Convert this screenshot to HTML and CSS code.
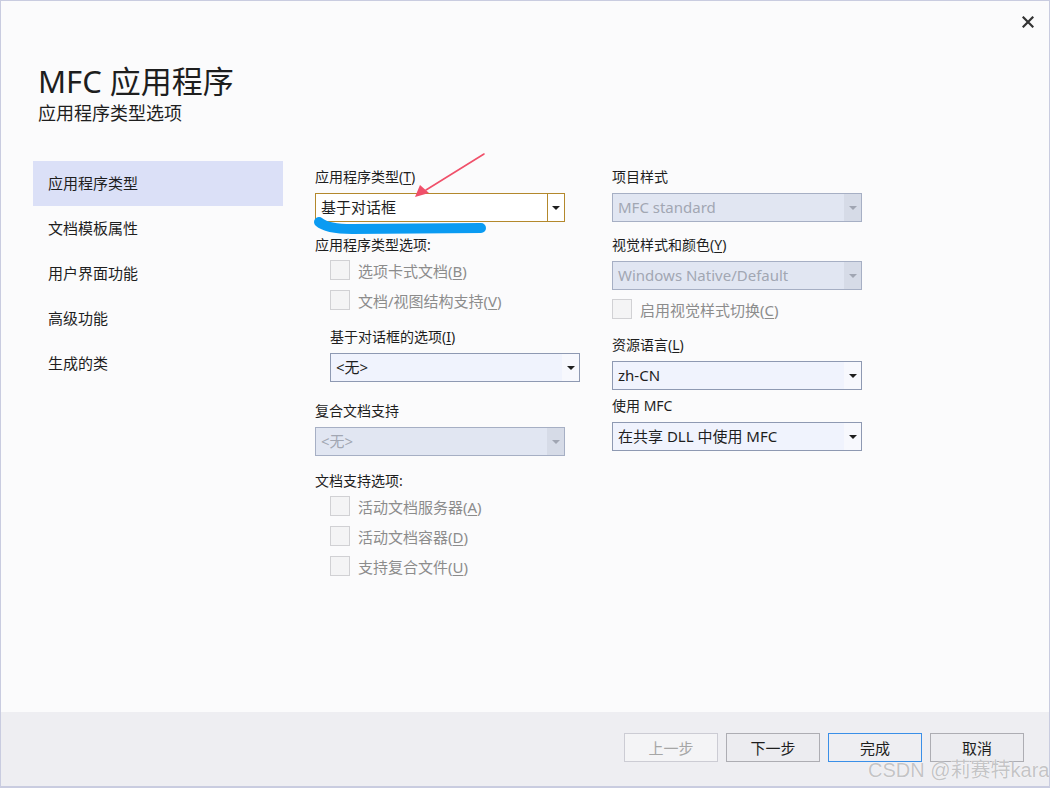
FILE: index.html
```html
<!DOCTYPE html>
<html lang="zh-CN">
<head>
<meta charset="utf-8">
<title>MFC 应用程序</title>
<link rel="stylesheet" href="styles.css">
</head>
<body>
<div class="window">
  <button class="close" aria-label="关闭">
    <svg width="12" height="12" viewBox="0 0 12 12"><path d="M1.5 1.5 L10.5 10.5 M10.5 1.5 L1.5 10.5" stroke="#333" stroke-width="2.2" stroke-linecap="square"/></svg>
  </button>
  <header class="header">
    <h1 class="title">MFC 应用程序</h1>
    <div class="subtitle">应用程序类型选项</div>
  </header>
  <main class="main">
    <nav class="sidebar">
      <div class="nav-item selected">应用程序类型</div>
      <div class="nav-item">文档模板属性</div>
      <div class="nav-item">用户界面功能</div>
      <div class="nav-item">高级功能</div>
      <div class="nav-item">生成的类</div>
    </nav>
    <section class="col col1">
      <div class="label l-first">应用程序类型(<u>T</u>)</div>
      <div class="combo focus"><span class="val">基于对话框</span><span class="btn"><i class="arrow"></i></span></div>
      <div class="label l-13">应用程序类型选项:</div>
      <div class="checks indent">
        <div class="check"><span class="box"></span><span>选项卡式文档(<u>B</u>)</span></div>
        <div class="check"><span class="box"></span><span>文档/视图结构支持(<u>V</u>)</span></div>
      </div>
      <div class="label l-12 indent">基于对话框的选项(<u>I</u>)</div>
      <div class="combo normal indent"><span class="val">&lt;无&gt;</span><span class="btn"><i class="arrow"></i></span></div>
      <div class="label l-19">复合文档支持</div>
      <div class="combo disabled"><span class="val">&lt;无&gt;</span><span class="btn"><i class="arrow"></i></span></div>
      <div class="label l-15">文档支持选项:</div>
      <div class="checks indent">
        <div class="check"><span class="box"></span><span>活动文档服务器(<u>A</u>)</span></div>
        <div class="check"><span class="box"></span><span>活动文档容器(<u>D</u>)</span></div>
        <div class="check"><span class="box"></span><span>支持复合文件(<u>U</u>)</span></div>
      </div>
    </section>
    <section class="col col2">
      <div class="label l-first">项目样式</div>
      <div class="combo disabled"><span class="val">MFC standard</span><span class="btn"><i class="arrow"></i></span></div>
      <div class="label l-13">视觉样式和颜色(<u>Y</u>)</div>
      <div class="combo disabled"><span class="val">Windows Native/Default</span><span class="btn"><i class="arrow"></i></span></div>
      <div class="checks c-4">
        <div class="check"><span class="box"></span><span>启用视觉样式切换(<u>C</u>)</span></div>
      </div>
      <div class="label l-11">资源语言(<u>L</u>)</div>
      <div class="combo normal"><span class="val">zh-CN</span><span class="btn"><i class="arrow"></i></span></div>
      <div class="label l-6">使用 MFC</div>
      <div class="combo normal"><span class="val">在共享 DLL 中使用 MFC</span><span class="btn"><i class="arrow"></i></span></div>
    </section>
  </main>
  <footer class="footer">
    <button class="fbtn dis">上一步</button>
    <button class="fbtn">下一步</button>
    <button class="fbtn primary">完成</button>
    <button class="fbtn">取消</button>
  </footer>
  <svg class="annot" width="1050" height="788" viewBox="0 0 1050 788">
    <path d="M319 222 Q327 229 352 229 L481 228" stroke="#0a9bf2" stroke-width="10" fill="none" stroke-linecap="round"/>
    <path d="M484 154 L426 190" stroke="#f0506a" stroke-width="1.6" fill="none" stroke-linecap="round"/>
    <path d="M415 197 L420 185 L429 193 Z" fill="#f0506a"/>
  </svg>
  <div class="watermark">CSDN @莉赛特kara</div>
</div>
</body>
</html>
```

FILE: styles.css
```css
* { box-sizing: border-box; }
html, body { margin: 0; padding: 0; }
body {
  font-family: "Noto Sans", "Noto Sans CJK SC", sans-serif;
  color: #1e1e1e;
  background: #fbfbfc;
}
.window {
  position: relative;
  width: 1050px;
  height: 788px;
  border: 1px solid #c9cce0;
  border-bottom-width: 2px;
  background: #fbfbfc;
  display: flex;
  flex-direction: column;
  overflow: hidden;
}
.close {
  position: absolute;
  top: 14px;
  right: 14px;
  width: 14px;
  height: 14px;
  padding: 0;
  border: 0;
  background: transparent;
  display: flex;
  align-items: center;
  justify-content: center;
}
.header { padding: 62px 0 0 37px; }
.title {
  margin: 0;
  font-weight: 400;
  font-size: 31px;
  line-height: 36px;
  color: #1e1e1e;
  font-family: "Noto Sans", "Noto Sans CJK SC", sans-serif;
}
.subtitle {
  margin-top: 2px;
  font-size: 18px;
  line-height: 24px;
}
.main {
  flex: 1;
  display: flex;
  padding-top: 36px;
  padding-left: 32px;
}
.sidebar {
  width: 250px;
  display: flex;
  flex-direction: column;
}
.nav-item {
  height: 45px;
  line-height: 45px;
  padding-left: 15px;
  font-size: 15px;
}
.nav-item.selected { background: #dbe0f7; }
.col {
  display: flex;
  flex-direction: column;
  align-items: flex-start;
}
.col1 { width: 265px; margin-left: 32px; }
.col2 { width: 250px; margin-left: 32px; }
.label {
  font-size: 14px;
  line-height: 20px;
  height: 20px;
  white-space: nowrap;
}
.label u, .check u { text-decoration-thickness: 1px; text-underline-offset: 2px; }
.l-first { margin-top: 6px; }
.l-6 { margin-top: 6px; }
.l-11 { margin-top: 11px; }
.l-12 { margin-top: 12px; }
.l-13 { margin-top: 13px; }
.l-15 { margin-top: 15px; }
.l-19 { margin-top: 19px; }
.indent { margin-left: 15px; }
.combo {
  margin-top: 6px;
  width: 250px;
  height: 29px;
  border: 1px solid #8e99b2;
  display: flex;
  align-items: stretch;
  font-size: 15px;
}
.combo .val {
  flex: 1;
  padding-left: 5px;
  line-height: 27px;
  white-space: nowrap;
  overflow: hidden;
}
.combo .btn {
  width: 17px;
  display: flex;
  align-items: center;
  justify-content: center;
}
.arrow {
  width: 0;
  height: 0;
  border-left: 4px solid transparent;
  border-right: 4px solid transparent;
  border-top: 4px solid #1e1e1e;
  margin-top: 1px;
}
.combo.focus { border-color: #b3882c; background: #ffffff; }
.combo.focus .btn { border-left: 1px solid #b3882c; }
.combo.normal { background: #f0f3fd; color: #1e1e1e; }
.combo.normal .btn { background: #f7f8fd; }
.combo.disabled {
  background: #e1e6f2;
  border-color: #a6afc4;
  color: #a2a7b3;
}
.combo.disabled .btn { background: #d6dbe7; }
.combo.disabled .arrow { border-top-color: #a0a5b2; }
.checks { display: flex; flex-direction: column; }
.c-4 { margin-top: 4px; }
.check {
  height: 30px;
  display: flex;
  align-items: center;
  font-size: 15px;
  color: #8c8c8c;
  white-space: nowrap;
}
.check .box {
  width: 20px;
  height: 20px;
  border: 1px solid #d1d1d4;
  background: #f4f4f5;
  margin-right: 8px;
}
.footer {
  height: 74px;
  background: #eeeef2;
  display: flex;
  justify-content: flex-end;
  align-items: flex-start;
  padding: 21px 25px 0 0;
  gap: 8px;
}
.fbtn {
  width: 94px;
  height: 29px;
  border: 1px solid #adadb3;
  background: #ececf0;
  font-family: "Noto Sans", "Noto Sans CJK SC", sans-serif;
  font-size: 15px;
  color: #1e1e1e;
  padding: 0;
}
.fbtn.dis { background: #f4f4f6; border-color: #ccccd4; color: #a6a6a6; }
.fbtn.primary { border-color: #3a8fe8; background: #eeeef2; }
.annot {
  position: absolute;
  left: -1px;
  top: -1px;
  pointer-events: none;
}
.watermark {
  position: absolute;
  left: 867px;
  top: 757px;
  font-family: "Liberation Sans", "Noto Sans CJK SC", sans-serif;
  font-size: 20px;
  line-height: 24px;
  color: #c4c4c6;
  text-shadow: 0 0 1px #ffffff, 0 0 1px #ffffff;
  white-space: nowrap;
}
```
